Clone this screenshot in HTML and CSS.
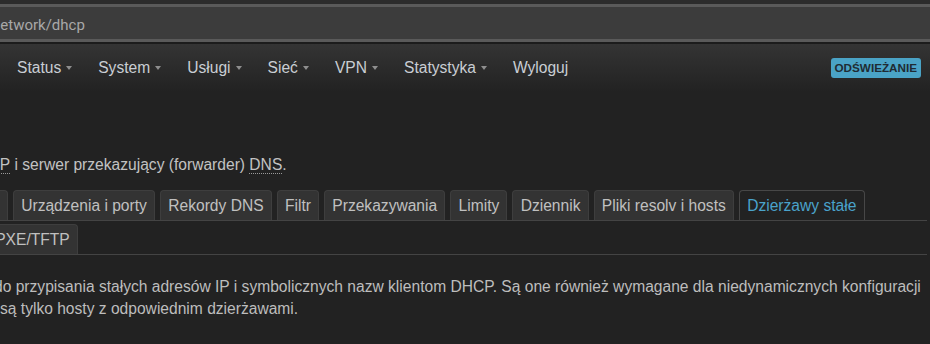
FILE: index.html
```html
<!DOCTYPE html>
<html lang="pl">
<head>
    <meta charset="UTF-8">
    <meta name="viewport" content="width=device-width, initial-scale=1.0">
    <title>DHCP i DNS - LuCI</title>
    <link rel="stylesheet" href="styles.css">
</head>
<body>
    <div class="browser-bar">
        <div class="address"><span class="address-text">network/dhcp</span></div>
    </div>

    <div class="navbar">
        <ul class="nav">
            <li><a href="#">Status</a><b class="caret"></b></li>
            <li><a href="#">System</a><b class="caret"></b></li>
            <li><a href="#">Usługi</a><b class="caret"></b></li>
            <li><a href="#">Sieć</a><b class="caret"></b></li>
            <li><a href="#">VPN</a><b class="caret"></b></li>
            <li><a href="#">Statystyka</a><b class="caret"></b></li>
            <li><a href="#">Wyloguj</a></li>
        </ul>
        <span class="label-refresh">ODŚWIEŻANIE</span>
    </div>

    <div class="main">
        <div class="map-descr">
            <span class="clip-dhcp"><abbr title="Dynamic Host Configuration Protocol">DHCP</abbr></span> i serwer przekazujący (forwarder) <abbr title="Domain Name System">DNS</abbr>.
        </div>

        <ul class="tabmenu">
            <li class="tab tab-cut"></li>
            <li class="tab"><a href="#">Urządzenia i porty</a></li>
            <li class="tab"><a href="#">Rekordy DNS</a></li>
            <li class="tab"><a href="#">Filtr</a></li>
            <li class="tab"><a href="#">Przekazywania</a></li>
            <li class="tab"><a href="#">Limity</a></li>
            <li class="tab"><a href="#">Dziennik</a></li>
            <li class="tab"><a href="#">Pliki resolv i hosts</a></li>
            <li class="tab active"><a href="#">Dzierżawy stałe</a></li>
        </ul>
        <ul class="tabmenu tabmenu-second">
            <li class="tab tab-left-cut"><a href="#">PXE/TFTP</a></li>
        </ul>

        <div class="section-descr">
            <span class="line line-first">do przypisania stałych adresów IP i symbolicznych nazw klientom DHCP. Są one również wymagane dla niedynamicznych konfiguracji</span>
            <span class="line">są tylko hosty z odpowiednim dzierżawami.</span>
        </div>
    </div>
</body>
</html>
```

FILE: styles.css
```css
/* ciemny motyw LuCI */
html, body {
    overflow: hidden;
}
body {
    margin: 0;
    padding: 0;
    background: #222;
    color: #c2c2c2;
    font-family: "Liberation Sans", Arial, sans-serif;
    font-size: 15.6px;
    line-height: 22px;
}
a {
    color: inherit;
    text-decoration: none;
}
ul {
    list-style: none;
    margin: 0;
    padding: 0;
}

/* pasek adresu */
.browser-bar {
    background: #2c2c2c;
    padding-top: 4px;
    border-bottom: 2px solid #1c1c1c;
}
.address {
    height: 29px;
    padding-top: 3px;
    background: #3c3c3c;
    border-top: 3px solid #5a5a5a;
    border-bottom: 3px solid #5a5a5a;
    display: flex;
    align-items: center;
    overflow: hidden;
}
.address-text {
    font-family: Roboto, sans-serif;
    font-size: 15px;
    color: #a8a8a8;
    margin-left: -8px;
    white-space: nowrap;
}

/* menu */
.navbar {
    height: 48px;
    background: linear-gradient(#343434, #222);
    display: flex;
    align-items: center;
    justify-content: space-between;
    padding: 0 9px 0 4px;
}
.nav {
    display: flex;
    align-items: center;
}
.nav li {
    padding: 0 13px;
    display: flex;
    align-items: center;
    color: #c9ced4;
}
.caret {
    width: 0;
    height: 0;
    margin-left: 5px;
    border-top: 4px solid #8e8e8e;
    border-left: 3px solid transparent;
    border-right: 3px solid transparent;
}
.label-refresh {
    background: #4aa3c6;
    color: #1f2b33;
    font-weight: bold;
    font-size: 11.7px;
    line-height: 20px;
    padding: 0 4px;
    border-radius: 3px;
}

/* tresc */
.main {
    padding-right: 3px;
}
.map-descr {
    margin-top: 62px;
    white-space: nowrap;
}
abbr {
    text-decoration: none;
    border-bottom: 1px dotted #9a9a9a;
    cursor: help;
}
.clip-dhcp {
    display: inline-block;
    margin-left: -34px;
}

.tabmenu {
    display: flex;
    gap: 5px;
    margin-top: 14px;
    border-bottom: 1px solid #444;
}
.tabmenu-second {
    margin-top: 3px;
}
.tab {
    background: #333;
    border: 1px solid #3e3e3e;
    border-bottom: none;
    border-radius: 4px 4px 0 0;
    padding: 6px 7.2px 5px;
    line-height: 18px;
    color: #c0c0c0;
    white-space: nowrap;
}
.tab.active {
    background: #222;
    border-color: #474747;
    color: #4aa3cb;
}
.tab-cut {
    width: 8px;
    padding: 0;
    margin-left: -1px;
    border-left: none;
    border-top-left-radius: 0;
}
.tab-left-cut {
    margin-left: -13px;
}

.section-descr {
    margin-top: 21px;
    color: #bdbdbd;
}
.line {
    display: block;
    white-space: nowrap;
}
.line-first {
    margin-left: -6px;
}
```
